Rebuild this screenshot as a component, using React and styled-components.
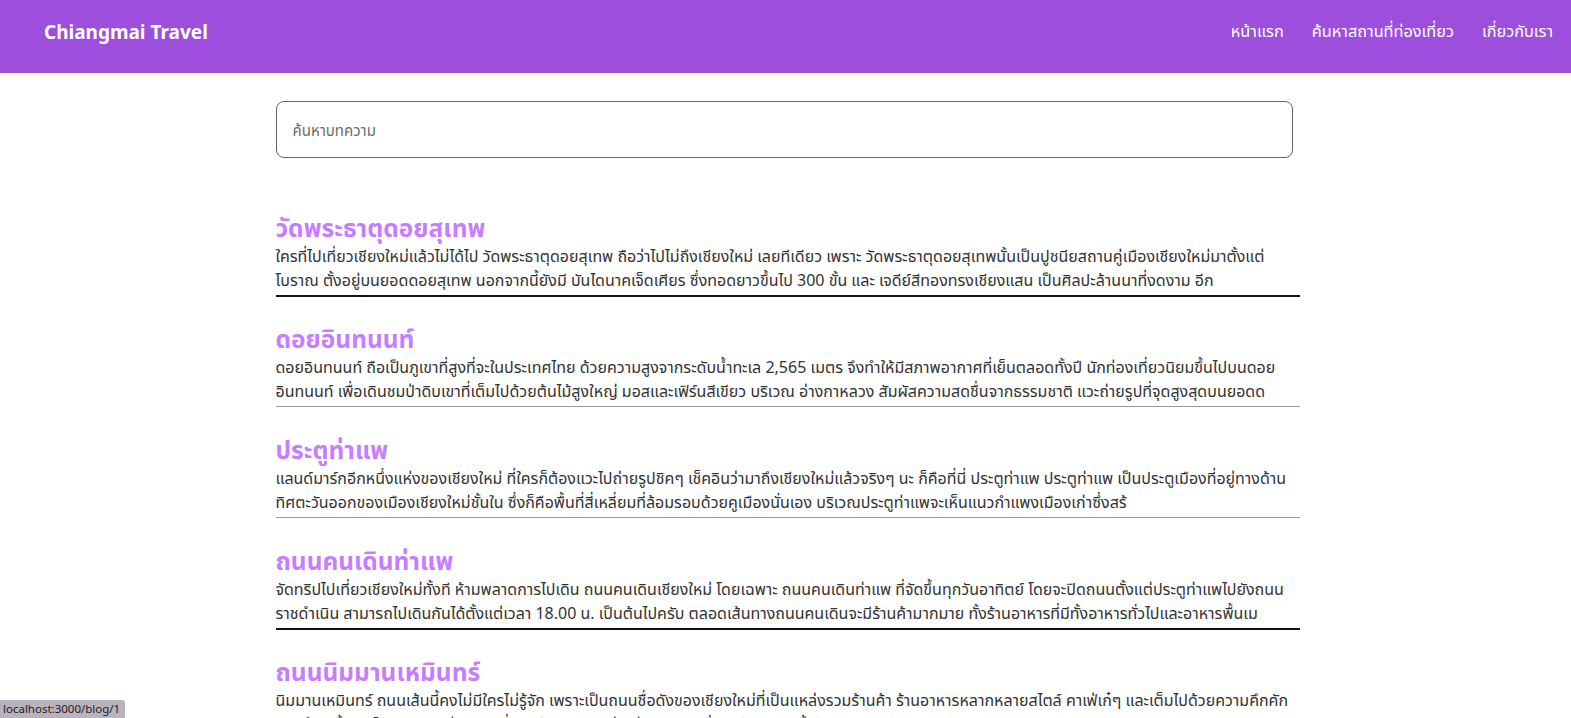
import React from "react";
import styled, { createGlobalStyle } from "styled-components";

const GlobalStyle = createGlobalStyle`
  html, body { margin: 0; padding: 0; background: #fff; }
  body { font-family: "Noto Sans", "Noto Sans Thai", "Noto Sans Thai UI", sans-serif; color: #333; }
  * { box-sizing: border-box; }
`;

const Header = styled.header`
  height: 73px;
  background: #9d4edd;
  display: flex;
  align-items: center;
  justify-content: space-between;
  padding: 0 18px 10px 44px;
`;

const Logo = styled.div`
  color: #fff;
  font-weight: 700;
  font-size: 19px;
`;

const Nav = styled.nav`
  display: flex;
  gap: 28px;
`;

const NavLink = styled.a`
  color: #fff;
  font-size: 16.3px;
  text-decoration: none;
`;

const Main = styled.main`
  width: 1024px;
  margin-left: calc((100% - 1020px) / 2);
  padding-top: 28px;
`;

const Search = styled.input`
  display: block;
  width: 1017px;
  height: 57px;
  border: 1px solid #666;
  border-radius: 8px;
  padding: 0 16px;
  font-family: inherit;
  font-size: 15px;
  color: #333;
  outline: none;
  &::placeholder { color: #6c6c6c; }
`;

const List = styled.div`
  margin-top: 46px;
  display: flex;
  flex-direction: column;
`;

const Item = styled.a`
  display: block;
  text-decoration: none;
  padding-top: 8px;
  margin-bottom: ${(p) => (p.$dark ? "18px" : "19px")};
  border-bottom: ${(p) => (p.$dark ? "2px solid #111" : "1px solid #9a9a9a")};
`;

const Title = styled.h2`
  margin: 0;
  font-size: 24.5px;
  font-weight: 700;
  color: #c77dff;
  line-height: 32px;
`;

const Excerpt = styled.p`
  margin: 0 0 3px;
  font-size: 16px;
  line-height: 24px;
  color: #333;
`;

const Status = styled.div`
  position: fixed;
  left: 0;
  bottom: 0;
  background: #b9b3bd;
  color: #222;
  font-size: 11.5px;
  padding: 1px 5px 2px 3px;
  border-top-right-radius: 3px;
  font-family: "Noto Sans", sans-serif;
`;

const posts = [
  {
    title: "วัดพระธาตุดอยสุเทพ",
    lines: [
      "ใครที่ไปเที่ยวเชียงใหม่แล้วไม่ได้ไป วัดพระธาตุดอยสุเทพ ถือว่าไปไม่ถึงเชียงใหม่ เลยทีเดียว เพราะ วัดพระธาตุดอยสุเทพนั้นเป็นปูชนียสถานคู่เมืองเชียงใหม่มาตั้งแต่",
      "โบราณ ตั้งอยู่บนยอดดอยสุเทพ นอกจากนี้ยังมี บันไดนาคเจ็ดเศียร ซึ่งทอดยาวขึ้นไป 300 ขั้น และ เจดีย์สีทองทรงเชียงแสน เป็นศิลปะล้านนาที่งดงาม อีก",
    ],
    dark: true,
  },
  {
    title: "ดอยอินทนนท์",
    lines: [
      "ดอยอินทนนท์ ถือเป็นภูเขาที่สูงที่จะในประเทศไทย ด้วยความสูงจากระดับน้ำทะเล 2,565 เมตร จึงทำให้มีสภาพอากาศที่เย็นตลอดทั้งปี นักท่องเที่ยวนิยมขึ้นไปบนดอย",
      "อินทนนท์ เพื่อเดินชมป่าดิบเขาที่เต็มไปด้วยต้นไม้สูงใหญ่ มอสและเฟิร์นสีเขียว บริเวณ อ่างกาหลวง สัมผัสความสดชื่นจากธรรมชาติ แวะถ่ายรูปที่จุดสูงสุดบนยอดด",
    ],
  },
  {
    title: "ประตูท่าแพ",
    lines: [
      "แลนด์มาร์กอีกหนึ่งแห่งของเชียงใหม่ ที่ใครก็ต้องแวะไปถ่ายรูปชิคๆ เช็คอินว่ามาถึงเชียงใหม่แล้วจริงๆ นะ ก็คือที่นี่ ประตูท่าแพ ประตูท่าแพ เป็นประตูเมืองที่อยู่ทางด้าน",
      "ทิศตะวันออกของเมืองเชียงใหม่ชั้นใน ซึ่งก็คือพื้นที่สี่เหลี่ยมที่ล้อมรอบด้วยคูเมืองนั่นเอง บริเวณประตูท่าแพจะเห็นแนวกำแพงเมืองเก่าซึ่งสร้",
    ],
  },
  {
    title: "ถนนคนเดินท่าแพ",
    lines: [
      "จัดทริปไปเที่ยวเชียงใหม่ทั้งที ห้ามพลาดการไปเดิน ถนนคนเดินเชียงใหม่ โดยเฉพาะ ถนนคนเดินท่าแพ ที่จัดขึ้นทุกวันอาทิตย์ โดยจะปิดถนนตั้งแต่ประตูท่าแพไปยังถนน",
      "ราชดำเนิน สามารถไปเดินกันได้ตั้งแต่เวลา 18.00 น. เป็นต้นไปครับ ตลอดเส้นทางถนนคนเดินจะมีร้านค้ามากมาย ทั้งร้านอาหารที่มีทั้งอาหารทั่วไปและอาหารพื้นเม",
    ],
    dark: true,
  },
  {
    title: "ถนนนิมมานเหมินทร์",
    lines: [
      "นิมมานเหมินทร์ ถนนเส้นนี้คงไม่มีใครไม่รู้จัก เพราะเป็นถนนชื่อดังของเชียงใหม่ที่เป็นแหล่งรวมร้านค้า ร้านอาหารหลากหลายสไตล์ คาเฟ่เก๋ๆ และเต็มไปด้วยความคึกคัก",
      "ของผู้คนทั้งชาวไทยและชาวต่างชาติ ที่แวะเวียนมาเดินเล่น ถ่ายรูป และนั่งชิลกันตลอดทั้งวัน",
    ],
  },
];

export default function App() {
  return (
    <>
      <GlobalStyle />
      <Header>
        <Logo>Chiangmai Travel</Logo>
        <Nav>
          <NavLink href="#">หน้าแรก</NavLink>
          <NavLink href="#">ค้นหาสถานที่ท่องเที่ยว</NavLink>
          <NavLink href="#">เกี่ยวกับเรา</NavLink>
        </Nav>
      </Header>
      <Main>
        <Search placeholder="ค้นหาบทความ" />
        <List>
          {posts.map((p, i) => (
            <Item key={i} href="#" $dark={p.dark}>
              <Title>{p.title}</Title>
              <Excerpt>
                {p.lines[0]}
                <br />
                {p.lines[1]}
              </Excerpt>
            </Item>
          ))}
        </List>
      </Main>
      <Status>localhost:3000/blog/1</Status>
    </>
  );
}
